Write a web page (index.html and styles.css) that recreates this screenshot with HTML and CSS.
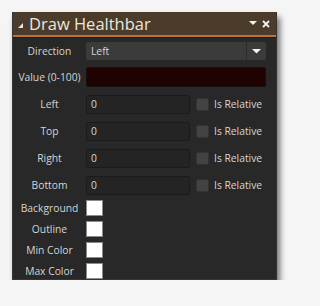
FILE: index.html
```html
<!DOCTYPE html>
<html>
<head>
<meta charset="utf-8">
<link rel="stylesheet" href="styles.css">
</head>
<body>
<div class="panel">
  <div class="titlebar">
    <svg class="corner" width="5" height="5" viewBox="0 0 5 5"><polygon points="5,0 5,5 0,5" fill="#e8e2da"/></svg>
    <span class="title">Draw Healthbar</span>
    <div class="tools">
      <svg width="8" height="5" viewBox="0 0 8 5"><polygon points="0,0 8,0 4,4" fill="#f2f2f2"/></svg>
      <svg width="8" height="8" viewBox="0 0 8 8"><path d="M1 1 L7 7 M7 1 L1 7" stroke="#f2f2f2" stroke-width="1.8"/></svg>
    </div>
  </div>
  <div class="body">
    <div class="row r-dir">
      <span class="label">Direction</span>
      <div class="select">
        <span class="sel-text">Left</span>
        <span class="sel-btn"><svg width="9" height="5" viewBox="0 0 9 5"><polygon points="0,0 9,0 4.5,4.5" fill="#f4f4f4"/></svg></span>
      </div>
    </div>
    <div class="row r-val">
      <span class="label">Value (0-100)</span>
      <div class="field value"></div>
    </div>
    <div class="row">
      <span class="label">Left</span>
      <div class="field short">0</div>
      <span class="check"></span><span class="rel">Is Relative</span>
    </div>
    <div class="row">
      <span class="label">Top</span>
      <div class="field short">0</div>
      <span class="check"></span><span class="rel">Is Relative</span>
    </div>
    <div class="row">
      <span class="label">Right</span>
      <div class="field short">0</div>
      <span class="check"></span><span class="rel">Is Relative</span>
    </div>
    <div class="row">
      <span class="label">Bottom</span>
      <div class="field short">0</div>
      <span class="check"></span><span class="rel">Is Relative</span>
    </div>
    <div class="colors">
      <div class="crow"><span class="label">Background</span><span class="swatch"></span></div>
      <div class="crow"><span class="label">Outline</span><span class="swatch"></span></div>
      <div class="crow"><span class="label">Min Color</span><span class="swatch"></span></div>
      <div class="crow"><span class="label">Max Color</span><span class="swatch"></span></div>
    </div>
  </div>
</div>
</body>
</html>
```
FILE: styles.css
```css
html, body {
  margin: 0;
  padding: 0;
  background: #f5f5f5;
}
body {
  font-family: "Open Sans", "DejaVu Sans", sans-serif;
  color: #d6d6d6;
  font-size: 10.3px;
}
.panel {
  margin: 12px 0 0 12px;
  width: 265px;
  height: 268px;
  box-sizing: border-box;
  background: #282828;
  border: 1px solid #353535;
  border-top: none;
  box-shadow: 3px 5px 6px rgba(0, 0, 0, 0.55);
  display: flex;
  flex-direction: column;
}
.titlebar {
  height: 23px;
  flex: none;
  background: #4b3b2b;
  border-bottom: 2px solid #b8743a;
  box-shadow: 0 1px 0 #1c1c1c;
  display: flex;
  align-items: center;
  padding-left: 5px;
  padding-right: 6px;
}
.corner {
  margin-top: 3px;
}
.title {
  margin-left: 6px;
  font-size: 16.5px;
  color: #ece6de;
  line-height: 20px;
}
.tools {
  margin-left: auto;
  display: flex;
  align-items: center;
  gap: 5px;
}
.body {
  padding: 5px 10px 0 0;
  display: flex;
  flex-direction: column;
  gap: 7px;
}
.row {
  display: flex;
  align-items: center;
  height: 20px;
}
.r-dir {
  height: 18px;
}
.label {
  width: 73px;
  flex: none;
  text-align: center;
  color: #d4d4d4;
}
.select {
  flex: 1;
  height: 18px;
  background: #3b3b3b;
  border-radius: 2px;
  display: flex;
  align-items: center;
  box-sizing: border-box;
}
.sel-text {
  padding-left: 5px;
  flex: 1;
}
.sel-btn {
  width: 19px;
  height: 18px;
  border-left: 1px solid #2b2b2b;
  display: flex;
  align-items: center;
  justify-content: center;
}
.field {
  height: 19px;
  box-sizing: border-box;
  background: #242424;
  border: 1px solid #1b1b1b;
  border-radius: 2px;
  padding-left: 4px;
  display: flex;
  align-items: center;
}
.value {
  flex: 1;
  height: 20px;
  background: #1f0303;
  border-color: #171010;
}
.short {
  width: 104px;
}
.check {
  width: 13px;
  height: 13px;
  box-sizing: border-box;
  background: #434343;
  border: 1px solid #333;
  border-radius: 2px;
  margin-left: 6px;
}
.rel {
  margin-left: 5px;
}
.colors {
  display: flex;
  flex-direction: column;
  gap: 5px;
  margin-top: -2px;
}
.crow {
  display: flex;
  align-items: center;
  height: 16px;
}
.swatch {
  width: 17px;
  height: 16px;
  box-sizing: border-box;
  background: #ffffff;
  border: 1px solid #8a8a8a;
}
```
